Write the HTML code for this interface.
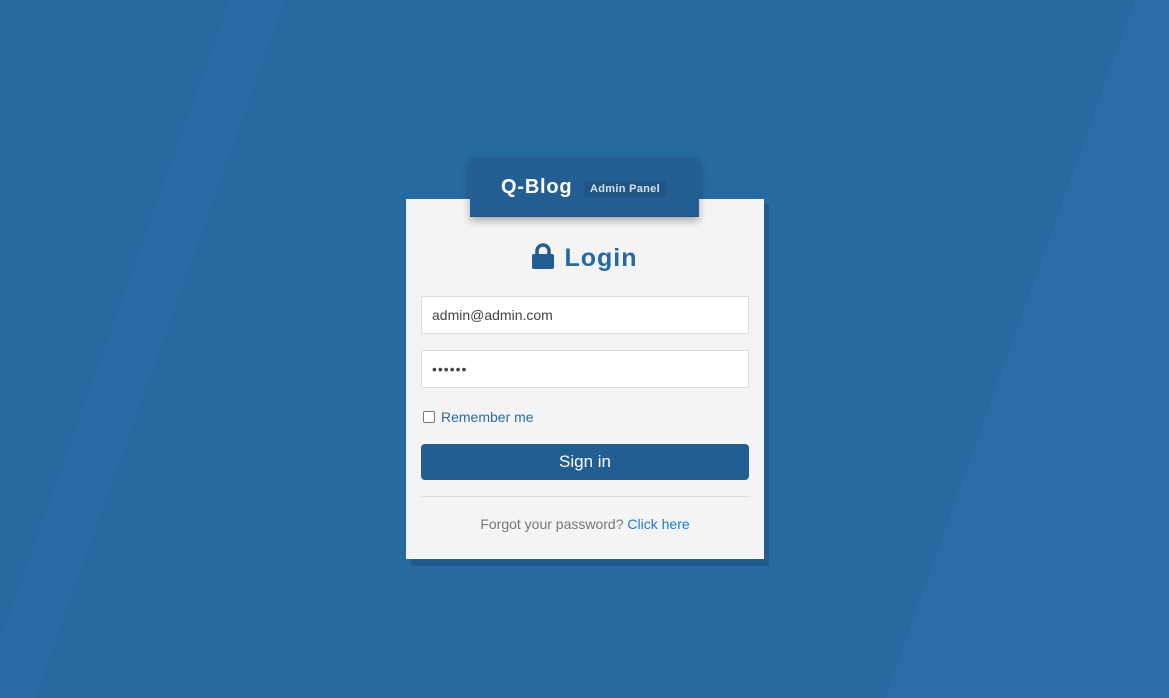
<!DOCTYPE html>
<html><head><style>
body{margin:0;width:1169px;height:698px;overflow:hidden;background:#266aa2;font-family:"Liberation Sans",sans-serif;position:relative}
svg.bg{position:absolute;left:0;top:0}
.shadow{position:absolute;left:411px;top:204px;width:358px;height:362px;background:#225b8c}
.panel{position:absolute;left:406px;top:199px;width:358px;height:360px;background:#f4f4f4}
.head{position:absolute;left:470px;top:158px;width:229px;height:59px;background:#235f93;box-shadow:0 4px 8px rgba(0,0,0,.3);border-bottom:1px solid #1f5585;box-sizing:border-box}
.head .t{position:absolute;left:31px;top:18px;color:#fff;font-weight:bold;font-size:20px;letter-spacing:.8px}
.head .b{position:absolute;left:114px;top:23px;background:#1f5686;color:#d8e2ec;font-size:11px;font-weight:bold;padding:2px 6px;letter-spacing:.3px}
.login{position:absolute;left:0;width:358px;top:44px;text-align:center;color:#236aa4;font-size:25px;font-weight:bold;letter-spacing:1px}
.inp{position:absolute;left:15px;width:328px;height:38px;background:#fff;border:1px solid #ddd;box-sizing:border-box;font-size:14px;color:#444;padding:10px 10px}
.rem{position:absolute;left:17px;top:210px;font-size:14px;color:#2c6aa6}
.rem i{display:inline-block;width:10px;height:10px;border:1px solid #777;border-radius:2px;vertical-align:-1px;margin-right:6px;background:#fff}
.btn{position:absolute;left:15px;top:245px;width:328px;height:36px;background:#225e91;border-radius:4px;color:#fff;text-align:center;line-height:36px;font-size:17px}
.hr{position:absolute;left:15px;top:297px;width:328px;height:1px;background:#ddd}
.f{position:absolute;left:0;width:358px;top:317px;text-align:center;font-size:14px;color:#777}
.f a{color:#1a7bd6}
</style></head><body>
<svg class="bg" width="1169" height="698"><polygon points="230,0 285,0 35,698 0,698 0,640" fill="#2a70a9" opacity=".35"/><polygon points="1135,0 1169,0 1169,698 885,698" fill="#2b6fa8" opacity=".8"/></svg>
<div class="shadow"></div>
<div class="panel">
<div class="login"><svg width="22" height="26" viewBox="0 0 22 26" style="vertical-align:-3px;margin-right:10px"><path d="M5 12V8a6 6 0 0 1 12 0v4" fill="none" stroke="#225e91" stroke-width="3.5"/><rect x="0" y="11" width="22" height="15" rx="2" fill="#225e91"/></svg>Login</div>
<div class="inp" style="top:97px">admin@admin.com</div>
<div class="inp" style="top:151px;letter-spacing:1px">••••••</div>
<div class="rem"><i></i>Remember me</div>
<div class="btn">Sign in</div>
<div class="hr"></div>
<div class="f">Forgot your password? <a>Click here</a></div>
</div>
<div class="head"><span class="t">Q-Blog</span><span class="b">Admin Panel</span></div>
</body></html>
